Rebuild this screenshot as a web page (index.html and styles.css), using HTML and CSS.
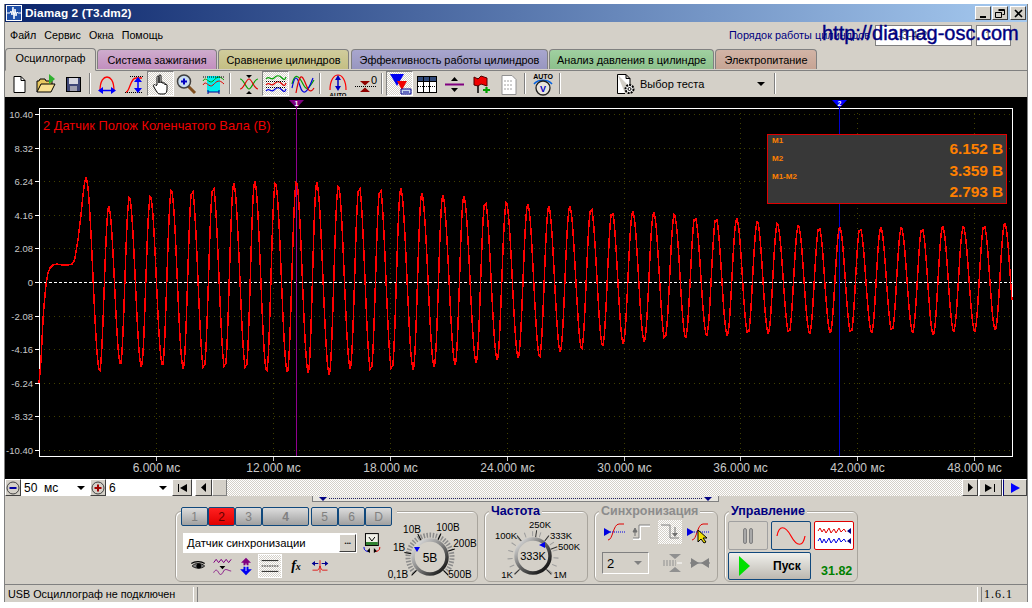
FILE: index.html
```html
<!DOCTYPE html>
<html lang="ru">

<head>
    <meta charset="utf-8">
    <title>Diamag 2 (T3.dm2)</title>
    <link rel="stylesheet" href="styles.css">
</head>

<body>
    <div class="win">
        <div class="titlebar">
            <svg class="app-ico" width="16" height="16" viewBox="0 0 16 16">
                <rect x="0.5" y="0.5" width="15" height="15" fill="#1e4fa8" stroke="#fff"/>
                <path d="M1 8H4L5 6L6 10L7 2L8 14L9 4L10 11L11 7L12 8H15" fill="none" stroke="#fff"/>
            </svg>
            <span class="title-text">Diamag 2 (T3.dm2)</span>
            <div class="caption">
                <button class="cap-btn"><svg width="9" height="9"><rect x="1" y="7" width="6" height="2"/></svg></button>
                <button class="cap-btn"><svg width="10" height="9"><path d="M3.5 .5H9.5V5.5H7.5M.5 3.5H6.5V8.5H.5ZM.5 3.5H6.5M3.5 1.5H9.5" fill="none" stroke="#000"/></svg></button>
                <button class="cap-btn cap-close"><svg width="9" height="9"><path d="M1 1L8 8M8 1L1 8" stroke="#000" stroke-width="1.6"/></svg></button>
            </div>
        </div>

        <div class="menubar">
            <span class="menu-item">Файл</span>
            <span class="menu-item">Сервис</span>
            <span class="menu-item">Окна</span>
            <span class="menu-item">Помощь</span>
            <div class="order">
                <span class="order-label">Порядок работы цилиндров</span>
                <span class="order-box order-seq">1-3-4-2</span>
                <span class="order-box order-num">1</span>
            </div>
            <div class="watermark">http://diamag-osc.com</div>
        </div>

        <div class="tabs">
            <div class="tab tab-osc">Осциллограф</div>
            <div class="tab tab-ign">Система зажигания</div>
            <div class="tab tab-cmp">Сравнение цилиндров</div>
            <div class="tab tab-eff">Эффективность работы цилиндров</div>
            <div class="tab tab-prs">Анализ давления в цилиндре</div>
            <div class="tab tab-pwr">Электропитание</div>
        </div>

        <div class="toolbar">
            <div class="tool"><svg viewBox="0 0 24 24"><path d="M7 4.500H14L18 8.500V20.500H7Z" fill="#fff" stroke="#000"/><path d="M14 4.500V8.500H18" fill="none" stroke="#000"/></svg></div>
            <div class="tool"><svg viewBox="0 0 24 24"><path d="M3 20V9H5L6 7H11L12 9H18V12" fill="#e8c860" stroke="#000"/><path d="M3 20L7 12H21L17 20Z" fill="#f8e090" stroke="#000"/><path d="M15 2L21 7L15 12Z" fill="#30b030"/></svg></div>
            <div class="tool"><svg viewBox="0 0 24 24"><rect x="5.500" y="5.500" width="14" height="14" fill="#404878" stroke="#000"/><rect x="8" y="6" width="9" height="6" fill="#d8d8e0"/><rect x="9" y="14" width="7" height="5" fill="#a0a0b0"/></svg></div>
            <i class="sep sep-tight"></i>
            <div class="tool"><svg viewBox="0 0 24 24"><path d="M5 19C5 8 9 5 12 5S19 8 19 19" fill="none" stroke="#f00" stroke-width="1.300"/><path d="M6 18.500H18" stroke="#00f" stroke-width="1.500"/><path d="M3 18.500L8 15V22ZM21 18.500L16 15V22Z" fill="#00f"/></svg></div>
            <div class="tool"><svg viewBox="0 0 24 24"><path d="M4 20C8 20 8 6 14 6H20" fill="none" stroke="#f00" stroke-width="1.300"/><path d="M8 4.500H21M3 20.500H21" stroke="#000" stroke-dasharray="1 1"/><path d="M16 8V17" stroke="#00f" stroke-width="1.500"/><path d="M16 5L20 10H12ZM16 21L20 16H12Z" fill="#00f"/></svg></div>
            <div class="tool down"><svg viewBox="0 0 24 24"><path d="M8 13V5.500C8 3.500 10 3.500 10 5.500V11V4C10 2.500 12 2.500 12 4V11C12 9.500 14 9.500 14 11V11.500C14 10.500 16 10.500 16 11.500V13C16 12 18 12 18 13V17C18 20 17 22 15 22H11C9 22 8 20 6 17L4.500 14C4 12.500 6 12 7 13.500Z" fill="#fff" stroke="#000"/></svg></div>
            <div class="tool tool-tight"><svg viewBox="0 0 24 24"><path d="M14 14L21 21" stroke="#805020" stroke-width="3"/><circle cx="10" cy="9.500" r="6.500" fill="#c8dcf0" stroke="#404040" stroke-width="1.500"/><path d="M7 9.500H13M10 6.500V12.500" stroke="#0000c0" stroke-width="2"/></svg></div>
            <div class="tool"><svg viewBox="0 0 24 24"><rect x="6" y="4" width="13" height="16" fill="#00f0f0"/><path d="M2 9C5 3 8 13 12 9S18 3 23 8" fill="none" stroke="#00a000"/><path d="M2 13C5 7 8 17 12 13S18 7 23 12" fill="none" stroke="#e00000"/><path d="M2 5H23" stroke="#000" stroke-dasharray="1 1"/><path d="M7 20H18M7 18V22M18 18V22" stroke="#000090"/></svg></div>
            <i class="sep sep-wide"></i>
            <div class="tool"><svg viewBox="0 0 24 24"><path d="M3 7C7 7 9 17 12 17S17 7 21 7" fill="none" stroke="#00a000" stroke-width="1.200"/><path d="M3 17C7 17 9 7 12 7S17 17 21 17" fill="none" stroke="#e00000" stroke-width="1.200"/><path d="M9 3H15L12 6ZM9 22H15L12 19Z" fill="#000"/></svg></div>
            <div class="tool down"><svg viewBox="0 0 24 24"><path d="M2 7C5 3 7 9 10 6S15 3 18 6S21 7 22 5" fill="none" stroke="#00a000" stroke-width="1.200"/><path d="M2 13C5 9 7 15 10 12S15 9 18 12S21 13 22 11" fill="none" stroke="#e00000" stroke-width="1.200"/><path d="M2 19C5 15 7 21 10 18S15 15 18 18S21 19 22 17" fill="none" stroke="#0000e0" stroke-width="1.200"/><path d="M2 9.500H22M2 15.500H22" stroke="#000" stroke-dasharray="1 1"/></svg></div>
            <div class="tool"><svg viewBox="0 0 24 24"><path d="M1 12C4 0 8 4 12 12S18 16 23 8" fill="none" stroke="#00a000" stroke-width="1.200"/><path d="M1 16C4 2 6 4 9 14S16 22 22 6" fill="none" stroke="#0000e0" stroke-width="1.200"/><path d="M5 21C8 4 10 2 13 8S18 24 23 16" fill="none" stroke="#e00000" stroke-width="1.200"/></svg></div>
            <i class="sep"></i>
            <div class="tool"><svg viewBox="0 0 24 24"><path d="M4 18C4 8 8 3 12 3S20 8 20 18" fill="none" stroke="#f00" stroke-width="1.200"/><path d="M12 7V15" stroke="#0000c0" stroke-width="1.500"/><path d="M12 3L15 8H9ZM12 19L15 14H9Z" fill="#0000c0"/><text class="ico-txt" x="12" y="25" text-anchor="middle">AUTO</text></svg></div>
            <div class="tool"><svg viewBox="0 0 24 24"><path d="M7 9H17L12 13.500ZM7 20H17L12 15.500Z" fill="#900000"/><path d="M2 14.500H23" stroke="#000" stroke-dasharray="1 1"/><text class="ico-num" x="18" y="12">0</text></svg></div>
            <i class="sep"></i>
            <div class="tool down"><svg viewBox="0 0 24 24"><path d="M2 2H16L9 14Z" fill="#0000f0"/><path d="M9 9H19L14 18Z" fill="#f00000"/><path d="M13 17V22H23V17H13Z" fill="#c8d8f0" stroke="#000090"/><path d="M15 20H21" stroke="#000090"/></svg></div>
            <div class="tool"><svg viewBox="0 0 24 24"><rect x="2.500" y="4.500" width="19" height="16" fill="#fff" stroke="#000"/><rect x="3" y="5" width="18" height="4" fill="#304878"/><path d="M8.500 4V20M14.500 4V20M2 9.500H21" stroke="#000"/><path d="M3 14.500H21" stroke="#000" stroke-dasharray="1 1"/></svg></div>
            <div class="tool"><svg viewBox="0 0 24 24"><path d="M3 12.500H22" stroke="#800080" stroke-width="2"/><path d="M9 9L12.500 5L16 9ZM9 16L12.500 20L16 16Z" fill="#000"/></svg></div>
            <div class="tool"><svg viewBox="0 0 24 24"><path d="M9 6V21" stroke="#000" stroke-width="1.500"/><path d="M5 5L9 7L12 4L18 6V14L12 12L9 14L5 13Z" fill="#f00000" stroke="#500000"/><path d="M14 18H21M17.500 15V21" stroke="#00a000" stroke-width="2.200"/></svg></div>
            <div class="tool"><svg viewBox="0 0 24 24"><path d="M6 3.500H16L20 7.500V22.500H6Z" fill="#fff" stroke="#909090"/><path d="M8 9H17M8 13H17M8 17H17" stroke="#a0a0a0" stroke-dasharray="2 1"/></svg></div>
            <i class="sep"></i>
            <div class="tool"><svg viewBox="0 0 24 24"><text class="ico-auto" x="12" y="7" text-anchor="middle">AUTO</text><path d="M3 12C7 7 17 7 21 12" fill="none" stroke="#0060e0" stroke-width="1.500"/><circle cx="12" cy="16" r="7" fill="#e8e4dc" stroke="#202020" stroke-width="1.300"/><text class="ico-v" x="12" y="19.500" text-anchor="middle">V</text></svg></div>
            <i class="sep"></i>
            <div class="test-select">
                <svg class="test-ico" width="22" height="24" viewBox="0 0 22 24"><path d="M2.500 2.500H11L15 6.500V15M10 21.500H2.500V2.500M11 2.500V6.500H15" fill="#fff" stroke="#000"/><circle cx="14.500" cy="17" r="4" fill="#fff" stroke="#000" stroke-width="2" stroke-dasharray="2 1"/><circle cx="14.500" cy="17" r="1.500" fill="none" stroke="#000"/></svg>
                <span>Выбор теста</span>
                <i class="caret"></i>
            </div>
            <i class="sep"></i>
        </div>

        <div class="chart">
            <svg id="scope" width="1022" height="382" viewBox="5 97 1022 382"></svg>
            <div class="readout">
                <div class="readout-names"><span>М1</span><span>М2</span><span>М1-М2</span></div>
                <div class="readout-vals"><span>6.152 В</span><span>3.359 В</span><span>2.793 В</span></div>
            </div>
        </div>

        <div class="scrollrow">
            <button class="rnd-btn"><svg width="14" height="14"><circle cx="7" cy="7" r="6" fill="#d4d0c8" stroke="#404040"/><path d="M3.500 7H10.500" stroke="#0000a0" stroke-width="2"/></svg></button>
            <div class="combo combo-time">50 &nbsp;мс<i class="caret"></i></div>
            <button class="rnd-btn"><svg width="14" height="14"><circle cx="7" cy="7" r="6" fill="#d4d0c8" stroke="#404040"/><path d="M3.500 7H10.500M7 3.500V10.500" stroke="#a00000" stroke-width="2"/></svg></button>
            <div class="combo combo-scale">6<i class="caret"></i></div>
            <button class="sb-btn sb-first"><svg width="11" height="8"><path d="M1 0V8H2V0ZM10 0V8L3 4Z"/></svg></button>
            <button class="sb-btn sb-prev"><svg width="5" height="9"><path d="M5 0V9L0 4.500Z"/></svg></button>
            <div class="sb-thumb"></div>
            <div class="sb-track"></div>
            <button class="sb-btn sb-next"><svg width="5" height="9"><path d="M0 0V9L5 4.500Z"/></svg></button>
            <button class="sb-btn sb-last"><svg width="11" height="8"><path d="M0 0V8L7 4ZM9 0V8H10V0Z"/></svg></button>
            <button class="sb-btn sb-play"><svg width="9" height="10"><path d="M0 0V10L9 5Z" fill="#0000ff"/></svg></button>
        </div>

        <div class="controls">
            <div class="splitter">
                <svg width="8" height="4"><path d="M0 0H8L4 4Z" fill="#000080"/></svg>
                <i class="split-dots"></i>
                <svg width="8" height="4"><path d="M0 0H8L4 4Z" fill="#000080"/></svg>
            </div>
            <div class="groups">
                <div class="group group-chan">
                    <div class="chan-btns">
                        <button class="chan">1</button>
                        <button class="chan chan-on">2</button>
                        <button class="chan">3</button>
                        <button class="chan chan-wide">4</button>
                        <button class="chan chan-gap">5</button>
                        <button class="chan">6</button>
                        <button class="chan">D</button>
                    </div>
                    <div class="chan-left">
                        <div class="sensor-row">
                            <div class="sensor">
                                <span>Датчик синхронизации</span>
                                <button class="dots">•••</button>
                            </div>
                            <svg width="20" height="20" viewBox="0 0 20 20"><rect x="3.500" y=".5" width="13" height="12" fill="#f0f0e8" stroke="#000"/><rect x="4" y="9" width="12" height="3" fill="#308030"/><path d="M7 4L10 8L13 4" fill="none" stroke="#000"/><path d="M2 14A4 4 0 0 0 8 18" fill="none" stroke="#0000e0"/><path d="M18 14A4 4 0 0 1 12 18" fill="none" stroke="#e00000"/><path d="M8 15V20L5 18ZM12 15V20L15 18Z" fill="#000"/></svg>
                        </div>
                        <div class="chan-icons">
                            <div class="cico"><svg viewBox="0 0 24 24"><path d="M5 12C8 8 16 8 20 12C16 16 8 15 5 12Z" fill="#808080" stroke="#000"/><circle cx="13" cy="12" r="3" fill="#000"/><path d="M4 9C8 6 16 6 20 9" fill="none" stroke="#000" stroke-width="1.500"/></svg></div>
                            <div class="cico"><svg viewBox="0 0 24 24"><path d="M2 8L5 4L8 8L11 4L14 8L17 4L20 8L23 4" fill="none" stroke="#800080" stroke-width="1.200"/><path d="M2 20C4 16 6 16 8 20S12 22 14 18S20 18 23 18" fill="none" stroke="#800080"/><path d="M9 12H16L12.500 16Z" fill="#000"/></svg></div>
                            <div class="cico"><svg viewBox="0 0 24 24"><path d="M12 2L18 8H15V11H9V8H6Z" fill="#800080"/><path d="M9 13H15V16H19L12 23L5 16H9Z" fill="#0000f0"/><path d="M12 9V18" stroke="#fff"/></svg></div>
                            <div class="cico cico-on"><svg viewBox="0 0 24 24"><path d="M2 5.500H22M2 18.500H22" stroke="#000"/><path d="M2 12H22" stroke="#000" stroke-dasharray="2 1"/></svg></div>
                            <div class="cico"><span class="fx">f<small>x</small></span></div>
                            <div class="cico"><svg viewBox="0 0 24 24"><path d="M12 5V20" stroke="#e00000"/><path d="M3 17H9C10 17 11 15 12 12C13 15 14 17 15 17H21" fill="none" stroke="#e00000"/><path d="M3 9H10M14 9H21" stroke="#000090" stroke-width="1.200"/><path d="M2 9L6 6V12ZM22 9L18 6V12Z" fill="#000090"/></svg></div>
                        </div>
                    </div>
                    <svg class="knob knob-v" width="92" height="62" viewBox="0 0 92 62">
                        <defs><linearGradient id="ring1" x1="0" y1="0" x2="1" y2="1"><stop offset="0" stop-color="#f0f0f0"/><stop offset=".5" stop-color="#808080"/><stop offset="1" stop-color="#000"/></linearGradient></defs>
                        <path d="M28.400 52.600A22 22 0 1 1 59.600 52.600" fill="none" stroke="#8c8c8c" stroke-width="5" stroke-dasharray="1.500 1.500"/>
                        <circle cx="44" cy="37" r="17" fill="#d4d0c8" stroke="url(#ring1)" stroke-width="3.500"/>
                        <g stroke="#000">
                            <line transform="rotate(-135 44 37)" x1="44" y1="11" x2="44" y2="18"/>
                            <line transform="rotate(-80 44 37)" x1="44" y1="11" x2="44" y2="18"/>
                            <line transform="rotate(-28 44 37)" x1="44" y1="11" x2="44" y2="18"/>
                            <line transform="rotate(25 44 37)" x1="44" y1="11" x2="44" y2="18"/>
                            <line transform="rotate(72 44 37)" x1="44" y1="11" x2="44" y2="18"/>
                            <line transform="rotate(135 44 37)" x1="44" y1="11" x2="44" y2="18"/>
                        </g>
                        <path d="M28 27H34L31 32Z" fill="#0000f0"/>
                        <text class="knob-val" x="44" y="42" text-anchor="middle">5В</text>
                        <g class="knob-lbl" text-anchor="middle">
                            <text x="26" y="13">10В</text>
                            <text x="62" y="11">100В</text>
                            <text x="79" y="27">200В</text>
                            <text x="13" y="31">1В</text>
                            <text x="12" y="58">0,1В</text>
                            <text x="74" y="58">500В</text>
                        </g>
                    </svg>
                </div>

                <div class="group group-freq">
                    <div class="legend">Частота</div>
                    <svg class="knob knob-f" width="96" height="66" viewBox="0 0 96 66">
                        <defs><linearGradient id="ring2" x1="0" y1="0" x2="1" y2="1"><stop offset="0" stop-color="#f0f0f0"/><stop offset=".5" stop-color="#606060"/><stop offset="1" stop-color="#000"/></linearGradient></defs>
                        <path d="M26.400 56.600A23 23 0 1 1 59.600 56.600" fill="none" stroke="#9c9c9c" stroke-width="5" stroke-dasharray="1 6.500"/>
                        <circle cx="43" cy="40" r="17" fill="#d4d0c8" stroke="url(#ring2)" stroke-width="3.500"/>
                        <g stroke="#303030">
                            <line transform="rotate(-135 43 40)" x1="43" y1="14" x2="43" y2="21"/>
                            <line transform="rotate(-38 43 40)" x1="43" y1="14" x2="43" y2="21"/>
                            <line transform="rotate(8 43 40)" x1="43" y1="14" x2="43" y2="21"/>
                            <line transform="rotate(38 43 40)" x1="43" y1="14" x2="43" y2="21"/>
                            <line transform="rotate(69 43 40)" x1="43" y1="14" x2="43" y2="21"/>
                            <line transform="rotate(135 43 40)" x1="43" y1="14" x2="43" y2="21"/>
                        </g>
                        <path d="M49 29L55 26V32Z" fill="#0000f0"/>
                        <text class="knob-val knob-val-f" x="43" y="44" text-anchor="middle">333K</text>
                        <g class="knob-lbl knob-lbl-f" text-anchor="middle">
                            <text x="50" y="12">250K</text>
                            <text x="16" y="23">100K</text>
                            <text x="71" y="23">333K</text>
                            <text x="79" y="34">500K</text>
                            <text x="17" y="62">1K</text>
                            <text x="70" y="62">1M</text>
                        </g>
                    </svg>
                </div>

                <div class="group group-sync">
                    <div class="legend legend-off">Синхронизация</div>
                    <div class="sync-row">
                        <div class="sico"><svg viewBox="0 0 24 24"><path d="M6 20C11 20 11 4 17 4H22" fill="none" stroke="#e00000"/><path d="M8 12H24" stroke="#0000e0" stroke-dasharray="1 1"/><path d="M2 8L9 12L2 16Z" fill="#0000e0"/></svg></div>
                        <div class="sico"><svg viewBox="0 0 24 24"><path d="M3 19H10V6H20" fill="none" stroke="#fff" stroke-width="2"/><path d="M3 18H9V5H20" fill="none" stroke="#808080"/><path d="M3 12L5 8L7 12ZM5 12V16" fill="#707070" stroke="#707070"/></svg></div>
                        <div class="sico sico-on"><svg viewBox="0 0 24 24"><path d="M3 5H12V18H21" fill="none" stroke="#808080"/><path d="M17 7V13" stroke="#707070"/><path d="M14 13H20L17 17Z" fill="#707070"/></svg></div>
                        <div class="sico"><svg viewBox="0 0 24 24"><path d="M6 20C11 20 11 4 17 4H22" fill="none" stroke="#e00000"/><path d="M8 12H24" stroke="#0000e0" stroke-dasharray="1 1"/><path d="M1 8L8 12L1 16Z" fill="#0000e0"/><path d="M12 10V22L15 19L18 23L20 22L17 18L21 18Z" fill="#f0e000" stroke="#000"/></svg></div>
                    </div>
                    <div class="sync-row sync-row2">
                        <div class="sync-combo">2<i class="caret caret-off"></i></div>
                        <div class="sico"><svg viewBox="0 0 24 24"><path d="M3 10H16M3 12H16M3 14H16" stroke="#909090" stroke-dasharray="2 1"/><path d="M9 3H21L15 8ZM9 21H21L15 16Z" fill="#909090"/><path d="M17 12H22" stroke="#fff"/></svg></div>
                        <div class="sico"><svg viewBox="0 0 24 24"><path d="M2 12H22" stroke="#a0a0a0" stroke-width="2"/><path d="M3 7L11 12L3 17ZM21 7L13 12L21 17Z" fill="#808080"/></svg></div>
                    </div>
                </div>

                <div class="group group-ctl">
                    <div class="legend">Управление</div>
                    <div class="ctl-row">
                        <button class="ctl ctl-pause"><i></i><i></i></button>
                        <button class="ctl ctl-sine"><svg width="30" height="22" viewBox="0 0 30 22"><path d="M1 11C3 0 9 0 15 11S27 22 29 11" fill="none" stroke="#f00" stroke-width="1.200"/></svg></button>
                        <button class="ctl ctl-noise"><svg width="34" height="22" viewBox="0 0 34 22"><path d="M1 6L3 3L5 7L7 4L9 8L12 3L14 8L17 4L19 8L22 3L24 7L27 4L29 7" fill="none" stroke="#e00000"/><path d="M1 16L3 13L5 18L7 14L9 18L12 13L14 18L17 14L19 18L22 13L24 17L27 14L29 17" fill="none" stroke="#0000e0"/><path d="M34 3V9L30 6ZM34 13V19L30 16Z" fill="#000080"/></svg></button>
                    </div>
                    <div class="ctl-row ctl-row2">
                        <button class="start"><svg width="11" height="20"><path d="M0 0V20L11 10Z" fill="#00e000"/></svg><b>Пуск</b></button>
                        <span class="rate">31.82</span>
                    </div>
                </div>
            </div>
        </div>

        <div class="status">
            <div class="stat stat-main">USB Осциллограф не подключен</div>
            <div class="stat stat-mid"></div>
            <div class="stat stat-ver">1.6.1</div>
        </div>
    </div>
    <script src="chart.js"></script>
</body>

</html>
```

FILE: styles.css
```css
* {
    box-sizing: border-box;
}

body {
    margin: 0;
    background-color: #fff;
    font-family: "Liberation Sans", Arial, sans-serif;
    font-size: 11px;
    color: #000;
}

button {
    font-family: inherit;
    padding: 0;
    background-color: #d4d0c8;
}

svg {
    display: block;
}

.win {
    margin: 4px 0 0 4px;
    width: 1024px;
    height: 598px;
    background-color: #d4d0c8;
    border-left: 1px solid #808080;
    border-right: 1px solid #808080;
    display: flex;
    flex-direction: column;
    overflow: hidden;
    position: relative;
}

/* title bar */
.titlebar {
    height: 18px;
    margin-left: -1px;
    margin-right: -1px;
    background: linear-gradient(to right, #0a246a, #a6caf0);
    display: flex;
    align-items: center;
    padding: 0 2px 0 2px;
}

.app-ico {
    margin-right: 3px;
}

.title-text {
    color: #fff;
    font-weight: bold;
    font-size: 11.8px;
    letter-spacing: 0.1px;
}

.caption {
    margin-left: auto;
    display: flex;
    gap: 1px;
}

.cap-btn {
    width: 16px;
    height: 14px;
    border: 1px solid;
    border-color: #fff #404040 #404040 #fff;
    display: flex;
    align-items: center;
    justify-content: center;
}

.cap-close {
    margin-left: 1px;
}

/* menu */
.menubar {
    height: 26px;
    display: flex;
    align-items: center;
    padding-left: 5px;
    font-size: 10.7px;
    position: relative;
}

.menu-item {
    margin-right: 8px;
}

.order {
    margin-left: auto;
    display: flex;
    align-items: center;
    padding-right: 16px;
}

.order-label {
    color: #000080;
    margin-right: 5px;
    font-size: 10.9px;
}

.order-box {
    height: 21px;
    background-color: #fff;
    border: 1px solid #808080;
    font-size: 11px;
    line-height: 19px;
    color: #555;
}

.order-seq {
    width: 97px;
    padding-left: 16px;
    margin-right: 4px;
}

.order-num {
    width: 35px;
    padding-left: 8px;
}

.watermark {
    position: absolute;
    left: 817px;
    top: 0;
    font-family: "Liberation Sans", Arial, sans-serif;
    font-size: 20px;
    line-height: 23px;
    color: #000080;
    -webkit-text-stroke: 0.4px #000080;
    white-space: nowrap;
}

/* tabs */
.tabs {
    height: 22px;
    display: flex;
    align-items: flex-end;
    gap: 1px;
    padding-left: 0;
    font-size: 10.9px;
    position: relative;
    z-index: 1;
}

.tab {
    height: 20px;
    border: 1px solid #808080;
    border-bottom: none;
    border-radius: 4px 4px 0 0;
    display: flex;
    align-items: center;
    justify-content: center;
    margin-bottom: 1px;
    white-space: nowrap;
}

.tab-osc {
    width: 91px;
    height: 23px;
    margin-bottom: -1px;
    background-color: #d4d0c8;
    padding-bottom: 3px;
    border-bottom: 1px solid #d4d0c8;
}

.tab-ign {
    width: 120px;
    background: linear-gradient(#ceaccd, #c28fbf);
}

.tab-cmp {
    width: 131px;
    margin-right: 1px;
    background: linear-gradient(#d0cc9c, #c4bf84);
}

.tab-eff {
    width: 197px;
    background: linear-gradient(#a8a6ce, #9896c0);
}

.tab-prs {
    width: 165px;
    background: linear-gradient(#a0d0a0, #8cc08c);
}

.tab-pwr {
    width: 102px;
    background: linear-gradient(#d2b4a6, #c6a494);
}

/* toolbar */
.toolbar {
    height: 26px;
    border-top: 1px solid #808080;
    display: flex;
    align-items: stretch;
    padding-left: 0;
    flex-shrink: 0;
}

.tool {
    width: 27px;
    display: flex;
    align-items: center;
    justify-content: center;
    overflow: hidden;
}

.tool-tight {
    margin-left: -2px;
}

.tool svg {
    width: 24px;
    height: 24px;
    overflow: visible;
}

.down {
    background: repeating-conic-gradient(#fff 0 25%, #d4d0c8 0 50%) 0 0 / 2px 2px;
    border: 1px solid;
    border-color: #808080 #fff #fff #808080;
}

.sep {
    width: 2px;
    margin: 2px 3px;
    border-left: 1px solid #808080;
    border-right: 1px solid #fff;
}

.sep-tight {
    margin-right: 2px;
}

.sep-wide {
    margin-right: 4px;
}

.ico-txt {
    font-size: 6px;
    font-weight: bold;
}

.ico-num {
    font-size: 11px;
}

.ico-auto {
    font-size: 7px;
    font-weight: bold;
}

.ico-v {
    font-size: 9px;
    fill: #0000c0;
    font-weight: bold;
}

.test-select {
    width: 207px;
    display: flex;
    align-items: center;
    padding-left: 51px;
    font-size: 11px;
}

.test-ico {
    margin-right: 3px;
}

.caret {
    display: inline-block;
    width: 0;
    height: 0;
    border-left: 4px solid transparent;
    border-right: 4px solid transparent;
    border-top: 4px solid #000;
    margin-left: auto;
}

.test-select .caret {
    margin-right: 6px;
}

/* chart */
.chart {
    margin-top: 1px;
    height: 382px;
    background-color: #000;
    position: relative;
    flex-shrink: 0;
}

.readout {
    position: absolute;
    left: 762px;
    top: 37px;
    width: 240px;
    height: 70px;
    background-color: #383838;
    border: 1px solid #e00000;
    color: #ff8000;
    font-weight: bold;
    display: flex;
    justify-content: space-between;
    padding: 0 3px 0 4px;
}

.readout-names {
    display: flex;
    flex-direction: column;
    gap: 8px;
    font-size: 8px;
    line-height: 10px;
    padding-top: 1px;
}

.readout-vals {
    display: flex;
    flex-direction: column;
    align-items: flex-end;
    font-size: 15.5px;
    line-height: 21.5px;
    padding-top: 3px;
    letter-spacing: -0.1px;
}

/* scroll row */
.scrollrow {
    height: 17px;
    display: flex;
    flex-shrink: 0;
    background-color: #fff;
}

.rnd-btn {
    width: 16px;
    height: 17px;
    border: 1px solid;
    border-color: #fff #404040 #404040 #fff;
    display: flex;
    align-items: center;
    justify-content: center;
}

.combo {
    height: 17px;
    background-color: #fff;
    font-size: 12px;
    line-height: 16px;
    padding-left: 3px;
    padding-right: 5px;
    display: flex;
    align-items: center;
}

.combo-time {
    width: 69px;
}

.combo-scale {
    width: 66px;
}

.sb-btn {
    height: 17px;
    border: 1px solid;
    border-color: #fff #404040 #404040 #fff;
    display: flex;
    align-items: center;
    justify-content: center;
}

.sb-first {
    width: 20px;
    margin-right: 3px;
}

.sb-prev {
    width: 17px;
}

.sb-thumb {
    width: 15px;
    height: 17px;
    background-color: #d4d0c8;
    border: 1px solid;
    border-color: #fff #808080 #808080 #fff;
}

.sb-track {
    flex: 1;
    height: 17px;
    background: repeating-conic-gradient(#fff 0 25%, #d4d0c8 0 50%) 0 0 / 2px 2px;
}

.sb-next {
    width: 16px;
}

.sb-last {
    width: 23px;
    margin-left: 1px;
}

.sb-play {
    width: 24px;
    margin-left: 1px;
    border-left: 1px solid #000080;
}

/* bottom panel */
.controls {
    flex: 1;
    min-height: 0;
    border-bottom: 1px solid #808080;
}

.splitter {
    width: 407px;
    height: 6px;
    margin-left: 307px;
    border: 1px solid #808080;
    border-top: none;
    display: flex;
    align-items: center;
    padding: 0 6px;
    gap: 2px;
    background-color: #e8e6e0;
}

.split-dots {
    flex: 1;
    border-top: 1px dotted #202060;
}

.groups {
    display: flex;
    padding-left: 170px;
    margin-top: 9px;
    gap: 6px;
}

.group {
    height: 71px;
    border: 1px solid #a8a49c;
    border-radius: 6px;
    box-shadow: inset 1px 1px 0 #fff;
    position: relative;
    display: flex;
}

.legend {
    position: absolute;
    left: 4px;
    top: -8px;
    padding: 0 2px;
    background-color: #d4d0c8;
    font-size: 12.5px;
    line-height: 15px;
    font-weight: bold;
    color: #000080;
}

.legend-off {
    color: #8c8c8c;
}

.group-chan {
    width: 303px;
    padding: 21px 0 0 7px;
}

.chan-btns {
    position: absolute;
    left: 5px;
    top: -5px;
    display: flex;
    background-color: #d4d0c8;
    padding-right: 5px;
}

.chan {
    width: 27px;
    height: 19px;
    margin-right: 0;
    border: 1px solid #10487c;
    border-radius: 2px;
    background: linear-gradient(#dcdcdc, #a0a0a0);
    color: #808080;
    font-size: 12px;
}

.chan-on {
    background: linear-gradient(#ff2020, #e00000);
    color: #600000;
}

.chan-wide {
    width: 47px;
    font-weight: bold;
}

.chan-gap {
    margin-left: 2px;
}

.chan-left {
    width: 199px;
}

.sensor-row {
    display: flex;
    align-items: center;
    gap: 5px;
}

.sensor {
    width: 176px;
    height: 20px;
    background-color: #fff;
    font-size: 11.3px;
    display: flex;
    align-items: center;
    padding-left: 4px;
    justify-content: space-between;
}

.dots {
    width: 17px;
    height: 18px;
    margin-right: 1px;
    border: 1px solid;
    border-color: #fff #404040 #404040 #fff;
    font-size: 6px;
    line-height: 14px;
    color: #202020;
}

.chan-icons {
    display: flex;
    margin-top: 1px;
    margin-left: 1px;
}

.cico {
    width: 24px;
    height: 24px;
    display: flex;
    align-items: center;
    justify-content: center;
}

.cico svg {
    width: 20px;
    height: 20px;
}

.cico:first-child {
    margin-left: 2px;
}

.cico-on {
    background: repeating-conic-gradient(#fff 0 25%, #d4d0c8 0 50%) 0 0 / 2px 2px;
    border: 1px solid #fff;
    margin-right: 2px;
}

.fx {
    font-family: "Liberation Serif", serif;
    font-style: italic;
    font-weight: bold;
    font-size: 14px;
}

.fx small {
    font-size: 10px;
}

.knob {
    overflow: visible;
}

.knob-v {
    margin-top: -13px;
    margin-left: 4px;
}

.knob-f {
    margin-top: 4px;
    margin-left: 5px;
}

.knob-val {
    font-size: 12px;
}

.knob-val-f {
    font-size: 11px;
}

.knob-lbl {
    font-size: 10px;
}

.knob-lbl-f {
    font-size: 9.5px;
}

.group-freq {
    width: 104px;
}

.group-sync {
    width: 124px;
    padding: 8px 0 0 7px;
    display: block;
}

.sync-row {
    display: flex;
}

.sico {
    width: 24px;
    height: 24px;
    margin-right: 4px;
    display: flex;
    align-items: center;
    justify-content: center;
}

.sico svg {
    width: 24px;
    height: 24px;
}

.sico-on {
    background: repeating-conic-gradient(#fff 0 25%, #d4d0c8 0 50%) 0 0 / 2px 2px;
}

.sync-row2 {
    margin-top: 7px;
    align-items: center;
}

.sync-combo {
    width: 47px;
    height: 22px;
    margin-right: 11px;
    border: 1px solid;
    border-color: #808080 #fff #fff #808080;
    font-size: 13px;
    display: flex;
    align-items: center;
    padding: 0 6px 0 4px;
}

.caret-off {
    border-top-color: #808080;
}

.group-ctl {
    width: 134px;
    padding: 9px 0 0 3px;
    display: block;
}

.ctl-row {
    display: flex;
    gap: 3px;
}

.ctl {
    width: 40px;
    height: 29px;
    border-radius: 2px;
    display: flex;
    align-items: center;
    justify-content: center;
}

.ctl-pause {
    border: 1px solid #a0a0a0;
    gap: 2px;
}

.ctl-pause i {
    width: 4px;
    height: 16px;
    background-color: #a8a8a8;
    border: 1px solid #808080;
    border-radius: 2px;
}

.ctl-sine {
    border: 1px solid #10487c;
}

.ctl-noise {
    border: 1px solid #e00000;
    background-color: #fff;
}

.ctl-row2 {
    margin-top: 2px;
    align-items: center;
}

.start {
    width: 83px;
    height: 28px;
    border: 1px solid #10487c;
    border-radius: 2px;
    background: linear-gradient(#f0f0ec, #bcb8b0);
    display: flex;
    align-items: center;
    padding-left: 10px;
    font-size: 12px;
}

.start b {
    margin-left: 23px;
}

.rate {
    margin-left: 7px;
    margin-top: 9px;
    color: #008000;
    font-weight: bold;
    font-size: 12.5px;
}

/* status bar */
.status {
    height: 17px;
    display: flex;
    flex-shrink: 0;
    padding-top: 2px;
}

.stat {
    height: 15px;
    border-left: 1px solid #808080;
    border-right: 1px solid #fff;
    line-height: 15px;
}

.stat-main {
    width: 189px;
    border-left: none;
    padding-left: 3px;
    font-size: 10.8px;
}

.stat-mid {
    margin-left: 3px;
    width: 781px;
}

.stat-ver {
    margin-left: 3px;
    flex: 1;
    padding-left: 2px;
    border-right: none;
    font-family: "Liberation Serif", serif;
    font-size: 12px;
    letter-spacing: 1px;
}
```

FILE: chart.js
```js
// scope trace and axes, drawn into #scope in page coordinates
let NS = "http://www.w3.org/2000/svg";
let scope = document.querySelector("#scope");

function add(tag, attrs, txt) {
    let el = document.createElementNS(NS, tag);
    for (let k in attrs) {
        el.setAttribute(k, attrs[k]);
    }
    if (txt) {
        el.textContent = txt;
    }
    scope.appendChild(el);
    return el;
}

let left = 39, right = 1012, top_ = 108, bottom = 456;
let gridCol = "#404000";
let lblCol = "#c8c8c8";

// y axis: 2.08 V per 33.6 px around 0 at y=282
for (let i = -5; i <= 5; i++) {
    let y = 282 - i * 33.6;
    let yy = Math.round(y) + 0.5;
    if (i != 0) {
        add("line", { x1: left, x2: right, y1: yy, y2: yy, stroke: gridCol, "stroke-dasharray": "1 4" });
    }
    add("line", { x1: 35, x2: left, y1: yy, y2: yy, stroke: "#fff" });
    let lbl = i == 0 ? "0" : (i * 2.08).toFixed(2);
    add("text", { x: 33, y: yy + 3.5, "text-anchor": "end", fill: lblCol, "font-size": 9.5 }, lbl);
}

// x axis: 6 ms per 116.9 px
for (let i = 1; i <= 8; i++) {
    let x = Math.round(39 + i * 116.9) + 0.5;
    add("line", { x1: x, x2: x, y1: top_, y2: bottom, stroke: gridCol, "stroke-dasharray": "1 4" });
    add("line", { x1: x, x2: x, y1: bottom, y2: 461, stroke: lblCol });
    add("text", { x: x, y: 472, "text-anchor": "middle", fill: lblCol, "font-size": 12 }, (i * 6).toFixed(3) + " мс");
}

add("rect", { x: left + 0.5, y: top_ + 0.5, width: right - left, height: bottom - top_, fill: "none", stroke: "#fff" });
add("line", { x1: left, x2: right, y1: 282.5, y2: 282.5, stroke: "#fff", "stroke-dasharray": "3 2" });

// cursors
add("line", { x1: 296.5, x2: 296.5, y1: 107, y2: 456, stroke: "#900090" });
add("line", { x1: 839.5, x2: 839.5, y1: 107, y2: 456, stroke: "#0000d0" });

add("text", { x: 43, y: 130, fill: "#f00000", "font-size": 12.9 }, "2 Датчик Полож Коленчатого Вала (В)");

// peaks and troughs read off the trace
let extrema = [
    [86, 178], [99.7, 370], [108.7, 207], [120.5, 364], [129.3, 198], [141.4, 366], [150.3, 197], [162.5, 365],
    [171.3, 191], [183.3, 368], [192, 189], [204, 370], [213, 186], [225, 369], [233.7, 184], [246, 370],
    [254.7, 182], [266.7, 371], [275.3, 183], [287.4, 372], [296.3, 182], [308.3, 372], [316.7, 183], [329.3, 374],
    [338.3, 186], [350.3, 368], [359, 186], [371, 372], [380, 188], [392, 371], [400.7, 189], [413.3, 369],
    [421.7, 194], [434.3, 366], [442.7, 196], [455.3, 364], [463.7, 197], [476.3, 362], [485, 201], [497.3, 359],
    [506.3, 203], [518.3, 357], [527.7, 205], [539.7, 356], [548.7, 207], [560.3, 351], [569.7, 207], [581.7, 348],
    [591, 208], [602.7, 345], [612, 211], [623.3, 343], [632.7, 212], [644.3, 341], [653.7, 213], [665, 339],
    [674.3, 215], [685.7, 337], [695, 217], [706.7, 335], [716, 218], [727.3, 335], [736.7, 219], [748, 334],
    [757.3, 222], [768.3, 333], [777.3, 224], [789, 333], [798.3, 226], [809.7, 333], [819, 227], [830.3, 332],
    [839.7, 228], [851, 333], [860, 228], [871.7, 332], [880.7, 228], [892, 331], [901.3, 228], [912.7, 332],
    [922, 228], [933.3, 334], [942.7, 227], [953.7, 331], [963.3, 227], [974.7, 331], [984, 225], [995.3, 329],
    [1004.7, 224], [1016, 330]
];

// run-up before the first peak
let d = "M39 383";
let runup = [[40, 372], [41, 360], [42, 340], [43, 320], [44, 306], [45, 295], [46, 285], [47, 278], [48, 273], [50, 268], [53, 265], [57, 264], [62, 265], [68, 265], [72, 264], [74, 261], [75, 258], [76, 252], [77, 246], [78, 240], [79, 231], [80, 223], [81, 215], [82, 205], [83, 195], [84, 187], [85, 181], [86, 178]];
runup.forEach(p => {
    d += "L" + p[0] + " " + p[1];
});

for (let i = 0; i < extrema.length - 1; i++) {
    let a = extrema[i], b = extrema[i + 1];
    let start = Math.floor(a[0]) + 1;
    for (let x = start; x < b[0] && x <= right; x++) {
        let t = (x - a[0]) / (b[0] - a[0]);
        let y = a[1] + (b[1] - a[1]) * (1 - Math.cos(Math.PI * t)) / 2;
        d += "L" + x + " " + Math.round(y);
    }
}
add("path", { d: d, fill: "none", stroke: "#ff0000", "stroke-width": 1.5, "shape-rendering": "crispEdges" });

// cursor flags go on top
add("path", { d: "M289 100H304L296.5 108Z", fill: "#800080" });
add("text", { x: 296.5, y: 106, "text-anchor": "middle", fill: "#fff", "font-size": 7, "font-weight": "bold" }, "1");
add("path", { d: "M832 100H847L839.5 108Z", fill: "#0000ff" });
add("text", { x: 839.5, y: 106, "text-anchor": "middle", fill: "#fff", "font-size": 7, "font-weight": "bold" }, "2");
```
